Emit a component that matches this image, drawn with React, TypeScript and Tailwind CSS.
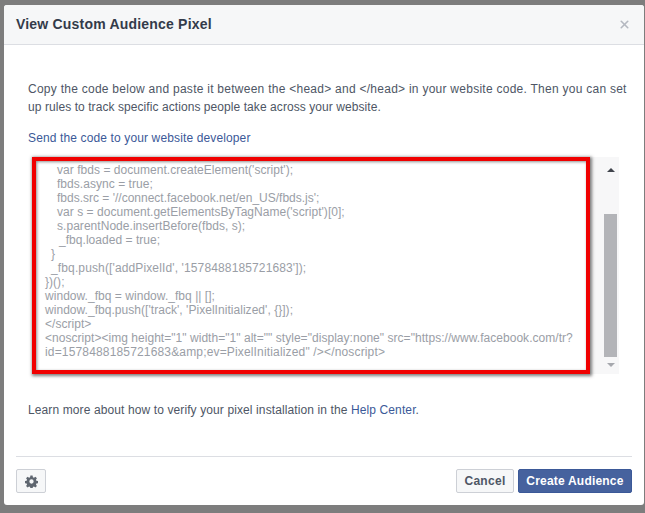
import { X } from "lucide-react";

const codeLines = [
  { indent: "pl-[12px]", text: "var fbds = document.createElement('script');" },
  { indent: "pl-[12px]", text: "fbds.async = true;" },
  { indent: "pl-[12px] tracking-[0px]", text: "fbds.src = '//connect.facebook.net/en_US/fbds.js';" },
  { indent: "pl-[12px]", text: "var s = document.getElementsByTagName('script')[0];" },
  { indent: "pl-[12px]", text: "s.parentNode.insertBefore(fbds, s);" },
  { indent: "pl-[14px]", text: "_fbq.loaded = true;" },
  { indent: "pl-[6px]", text: "}" },
  { indent: "pl-[6px] tracking-[0.13px]", text: "_fbq.push(['addPixelId', '1578488185721683']);" },
  { indent: "", text: "})();" },
  { indent: "", text: "window._fbq = window._fbq || [];" },
  { indent: "", text: "window._fbq.push(['track', 'PixelInitialized', {}]);" },
  { indent: "", text: "</script>" },
  { indent: "", text: '<noscript><img height="1" width="1" alt="" style="display:none" src="https://www.facebook.com/tr?' },
  { indent: "tracking-[0.16px]", text: 'id=1578488185721683&amp;ev=PixelInitialized" /></noscript>' },
];

function GearIcon() {
  return (
    <svg width="13" height="13" viewBox="0 0 24 24" fill="#5f6670">
      <path
        fillRule="evenodd"
        d="M10 1h4l.6 3.2 1.9.8 2.7-1.8 2.8 2.8-1.8 2.7.8 1.9 3 .6v4l-3 .6-.8 1.9 1.8 2.7-2.8 2.8-2.7-1.8-1.9.8-.6 3h-4l-.6-3-1.9-.8-2.7 1.8-2.8-2.8 1.8-2.7-.8-1.9-3-.6v-4l3-.6.8-1.9-1.8-2.7 2.8-2.8 2.7 1.8 1.9-.8L10 1zm2 7a4 4 0 1 0 0 8 4 4 0 0 0 0-8z"
      />
    </svg>
  );
}

export default function App() {
  return (
    <div className="h-[513px] w-[645px] overflow-hidden bg-[#7d7d7d] pt-[5px] pl-[4px] font-['Liberation_Sans',Arial,sans-serif]">
      <div className="flex h-[500px] w-[640px] flex-col rounded-[3px] bg-white">
        {/* Header */}
        <div className="flex h-[40px] shrink-0 items-center justify-between rounded-t-[3px] border-b border-[#dcdee3] bg-[#f6f7f8] pr-[13px] pl-[12px]">
          <h1 className="text-[14px] font-bold tracking-[0.2px] text-[#333b4a]">View Custom Audience Pixel</h1>
          <X size={13} strokeWidth={3} className="text-[#b4b8c0]" />
        </div>

        {/* Body */}
        <div className="flex-1 px-[12px] pt-[35px]">
          <div className="pl-[12px] text-[12px] leading-[18px] text-[#4e5665]">
            <p>
              <span className="tracking-[0.26px]">
                Copy the code below and paste it between the &lt;head&gt; and &lt;/head&gt; in your website code. Then you can set
              </span>
              <br />
              <span className="tracking-[0.07px]">up rules to track specific actions people take across your website.</span>
            </p>
            <p className="mt-[13px] tracking-[0.13px] text-[#3b5998]">Send the code to your website developer</p>
          </div>

          <div className="mt-[10px] ml-[16px] flex h-[217px] w-[587px] bg-[#f7f7f8]">
            <div className="h-full w-[558px] shrink-0 overflow-hidden border-[4px] border-[#f00000] bg-white pt-[2px] pl-[9px] text-[12px] leading-[14px] tracking-[0.04px] whitespace-nowrap text-[#9a9ea6] shadow-[1px_1px_3px_1px_rgba(70,70,70,0.7),inset_1px_1px_3px_rgba(70,70,70,0.6)]">
              {codeLines.map((line) => (
                <div key={line.text} className={line.indent}>
                  {line.text}
                </div>
              ))}
            </div>
            <div className="ml-[12px] flex w-[17px] flex-col items-center">
              <div className="mt-[11px] h-0 w-0 border-x-[4px] border-b-[4px] border-x-transparent border-b-[#40444c]" />
              <div className="mt-[42px] h-[143px] w-[13px] bg-[#b3b4b8]" />
              <div className="mt-[6px] h-0 w-0 border-x-[4px] border-t-[4px] border-x-transparent border-t-[#a6a8ad]" />
            </div>
          </div>

          <p className="mt-[27px] pl-[12px] text-[12px] leading-[18px] tracking-[0.11px] text-[#4e5665]">
            Learn more about how to verify your pixel installation in the <span className="text-[#3b5998]">Help Center</span>.
          </p>
        </div>

        {/* Footer */}
        <div className="mx-[12px] flex h-[49px] shrink-0 items-start justify-between border-t border-[#dcdee3] pt-[12px]">
          <button className="flex h-[24px] w-[30px] items-center justify-center rounded-[2px] border border-[#cdd0d6] bg-[#f6f7f8]">
            <GearIcon />
          </button>
          <div className="flex gap-[4px]">
            <button className="h-[24px] w-[58px] rounded-[2px] border border-[#cdd0d6] bg-[#f6f7f8] text-[12px] font-bold tracking-[0.3px] text-[#4e5665]">
              Cancel
            </button>
            <button className="h-[24px] w-[114px] rounded-[2px] border border-[#3b5998] bg-[#46629e] text-[12px] font-bold tracking-[0.2px] text-white">
              Create Audience
            </button>
          </div>
        </div>
      </div>
    </div>
  );
}
